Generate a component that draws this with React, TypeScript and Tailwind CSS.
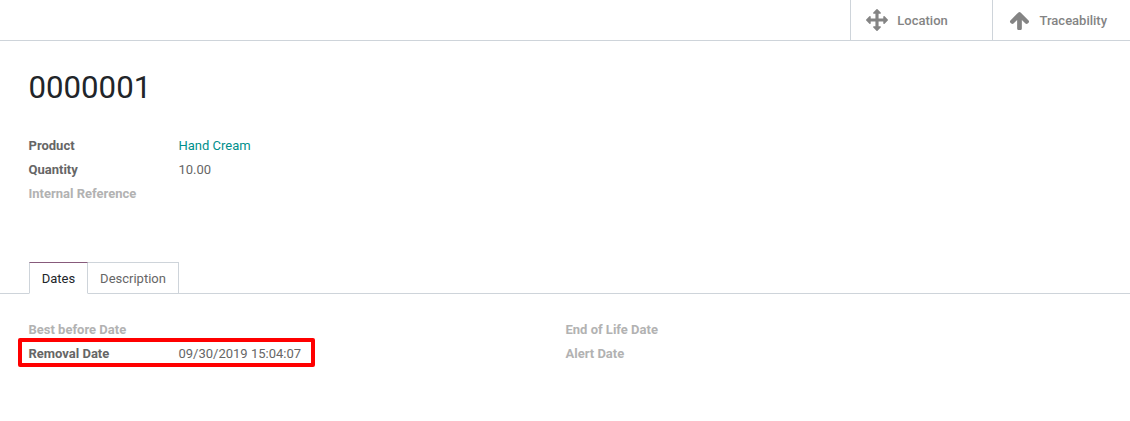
const ARROWS =
  "M1792 896q0 26-19 45l-256 256q-19 19-45 19t-45-19-19-45v-128h-384v384h128q26 0 45 19t19 45-19 45l-256 256q-19 19-45 19t-45-19l-256-256q-19-19-19-45t19-45 45-19h128v-384h-384v128q0 26-19 45t-45 19-45-19l-256-256q-19-19-19-45t19-45l256-256q19-19 45-19t45 19 19 45v128h384v-384h-128q-26 0-45-19t-19-45 19-45l256-256q19-19 45-19t45 19l256 256q19 19 19 45t-19 45-45 19h-128v384h384v-128q0-26 19-45t45-19 45 19l256 256q19 19 19 45z";
const ARROW_UP =
  "M1675 971q0 51-37 90l-75 75q-38 38-91 38-54 0-90-38l-294-293v704q0 52-37.500 84.500t-90.500 32.500h-128q-53 0-90.500-32.500t-37.500-84.500v-704l-294 293q-36 38-90 38t-90-38l-75-75q-38-38-38-90 0-53 38-91l651-651q35-37 90-37 54 0 91 37l651 651q37 39 37 91z";

function Icon({ path, viewBox = "0 0 1792 1792" }: { path: string; viewBox?: string }) {
  return (
    <svg viewBox={viewBox} className="h-[22px] w-[22px] shrink-0 fill-[#848484]">
      <path d={path} />
    </svg>
  );
}

function Field({ label, value, link }: { label: string; value?: string; link?: boolean }) {
  return (
    <div className="flex h-6 items-center">
      <span className={value ? "w-[150px] font-bold text-[#666666]" : "w-[150px] font-bold text-[#b2b2b2]"}>{label}</span>
      {value && <span className={link ? "text-[#008f8c]" : "text-[#666666]"}>{value}</span>}
    </div>
  );
}

export default function App() {
  return (
    <div className="h-[421px] w-[1130px] overflow-hidden bg-white font-['Roboto',sans-serif] text-[13px] leading-6 text-[#666666]">
      <header className="flex h-[41px] justify-end border-b border-[#ced4da] font-medium text-[#848484]">
        <button className="flex w-[142px] items-center border-l border-[#ced4da] pl-[15.3px]">
          <Icon path={ARROWS} />
          <span className="mt-px ml-[9px]">Location</span>
        </button>
        <button className="flex w-[138px] items-center border-l border-[#ced4da] pl-[15px]">
          <Icon path={ARROW_UP} viewBox="-40 -50 1792 1792" />
          <span className="mt-px ml-[9.5px]">Traceability</span>
        </button>
      </header>
      <h1 className="mt-[28px] ml-[28.5px] h-[38px] text-[31.2px] leading-[38px] text-[#212529]">0000001</h1>
      <section className="mt-[27px] ml-[28.5px]">
        <Field label="Product" value="Hand Cream" link />
        <Field label="Quantity" value="10.00" />
        <Field label="Internal Reference" />
      </section>
      <nav className="mt-[56px] flex h-[32px] border-b border-[#ced4da] pl-[29px]">
        <button className="h-[32px] w-[59px] border border-t-[#875a7b] border-r-[#ced4da] border-b-white border-l-[#ced4da] bg-white pt-[2px] text-[#212529]">Dates</button>
        <button className="h-[31px] w-[91px] border-t border-r border-[#ced4da] pt-[2px]">Description</button>
      </nav>
      <section className="mt-6 ml-[18px] flex">
        <div className="w-[547.5px]">
          <div className="pl-[10.5px]"><Field label="Best before Date" /></div>
          <div className="-mt-[4px] h-[29px] w-[297px] rounded-[2px] border-4 border-[#ff0000] pl-[6.5px]">
            <Field label="Removal Date" value="09/30/2019 15:04:07" />
          </div>
        </div>
        <div>
          <Field label="End of Life Date" />
          <Field label="Alert Date" />
        </div>
      </section>
    </div>
  );
}
